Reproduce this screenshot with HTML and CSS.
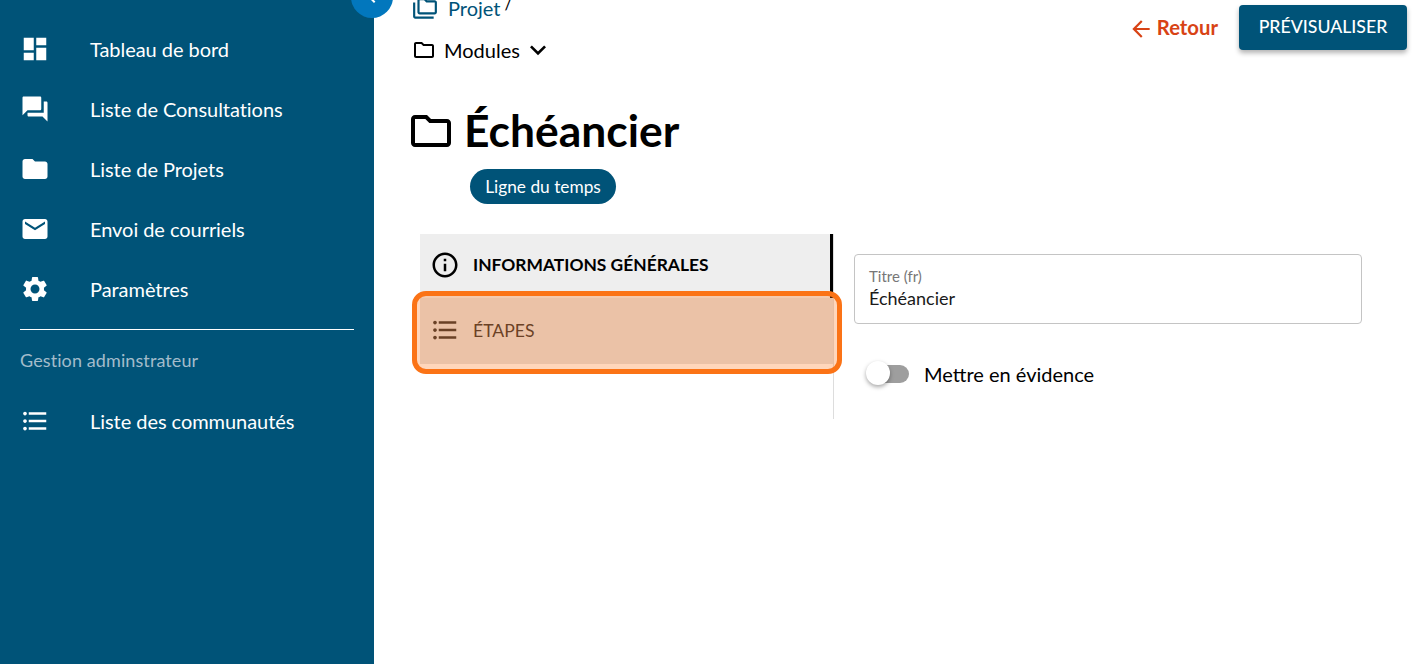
FILE: index.html
```html
<!DOCTYPE html>
<html lang="fr">
<head>
<meta charset="utf-8">
<title>Échéancier</title>
<link rel="stylesheet" href="styles.css">
</head>
<body>
<div class="app">
  <aside class="sidebar">
    <nav class="nav">
      <a class="nav-item"><svg class="nav-icon" viewBox="0 0 24 24"><path d="M3 13h8V3H3v10zm0 8h8v-6H3v6zm10 0h8V11h-8v10zm0-18v6h8V3h-8z"/></svg><span>Tableau de bord</span></a>
      <a class="nav-item"><svg class="nav-icon" viewBox="0 0 24 24"><path d="M21 6h-2v9H6v2c0 .55.45 1 1 1h11l4 4V7c0-.55-.45-1-1-1zm-4 6V3c0-.55-.45-1-1-1H3c-.55 0-1 .45-1 1v14l4-4h10c.55 0 1-.45 1-1z"/></svg><span>Liste de Consultations</span></a>
      <a class="nav-item"><svg class="nav-icon" viewBox="0 0 24 24"><path d="M10 4H4c-1.1 0-1.99.9-1.99 2L2 18c0 1.1.9 2 2 2h16c1.1 0 2-.9 2-2V8c0-1.1-.9-2-2-2h-8l-2-2z"/></svg><span>Liste de Projets</span></a>
      <a class="nav-item"><svg class="nav-icon" viewBox="0 0 24 24"><path d="M20 4H4c-1.1 0-1.99.9-1.99 2L2 18c0 1.1.9 2 2 2h16c1.1 0 2-.9 2-2V6c0-1.1-.9-2-2-2zm0 4l-8 5-8-5V6l8 5 8-5v2z"/></svg><span>Envoi de courriels</span></a>
      <a class="nav-item"><svg class="nav-icon" viewBox="0 0 24 24"><path d="M19.14 12.94c.04-.3.06-.61.06-.94 0-.32-.02-.64-.07-.94l2.03-1.58c.18-.14.23-.41.12-.61l-1.92-3.32c-.12-.22-.37-.29-.59-.22l-2.39.96c-.5-.38-1.03-.7-1.62-.94l-.36-2.54c-.04-.24-.24-.41-.48-.41h-3.84c-.24 0-.43.17-.47.41l-.36 2.54c-.59.24-1.13.57-1.62.94l-2.39-.96c-.22-.08-.47 0-.59.22L2.74 8.87c-.12.21-.08.47.12.61l2.03 1.58c-.05.3-.09.63-.09.94s.02.64.07.94l-2.03 1.58c-.18.14-.23.41-.12.61l1.92 3.32c.12.22.37.29.59.22l2.39-.96c.5.38 1.03.7 1.62.94l.36 2.54c.05.24.24.41.48.41h3.84c.24 0 .44-.17.47-.41l.36-2.54c.59-.24 1.13-.56 1.62-.94l2.39.96c.22.08.47 0 .59-.22l1.92-3.32c.12-.22.07-.47-.12-.61l-2.01-1.58zM12 15.6c-1.98 0-3.6-1.62-3.6-3.6s1.62-3.6 3.6-3.6 3.6 1.62 3.6 3.6-1.62 3.6-3.6 3.6z"/></svg><span>Paramètres</span></a>
    </nav>
    <hr class="nav-divider">
    <div class="nav-heading">Gestion adminstrateur</div>
    <nav class="nav">
      <a class="nav-item"><svg class="nav-icon" viewBox="0 0 24 24"><path d="M4 10.5c-.83 0-1.5.67-1.5 1.5s.67 1.5 1.5 1.5 1.5-.67 1.5-1.5-.67-1.5-1.5-1.5zm0-6c-.83 0-1.5.67-1.5 1.5S3.17 7.5 4 7.5 5.5 6.83 5.5 6 4.83 4.5 4 4.5zm0 12c-.83 0-1.5.68-1.5 1.5s.68 1.5 1.5 1.5 1.5-.68 1.5-1.5-.67-1.5-1.5-1.5zM7 19h14v-2H7v2zm0-6h14v-2H7v2zm0-8v2h14V5H7z"/></svg><span>Liste des communautés</span></a>
    </nav>
    <button class="collapse-btn" type="button" aria-label="Réduire"><svg viewBox="0 0 24 24"><path d="M15.41 7.41L14 6l-6 6 6 6 1.41-1.41L10.83 12z"/></svg></button>
  </aside>

  <main class="main">
    <div class="top-row">
      <div class="crumbs">
        <div class="crumb-project">
          <svg class="crumb-project-icon" viewBox="0 0 24 24"><path d="M3 19h17v2H3c-1.1 0-2-.9-2-2V6h2v13zM23 6v9c0 1.1-.9 2-2 2H7c-1.1 0-2-.9-2-2l.01-11C5.01 2.9 5.9 2 7 2h5l2 2h7c1.1 0 2 .9 2 2zM7 15h14V6h-7.83l-2-2H7v11z"/></svg>
          <a class="crumb-link">Projet</a><span class="crumb-sep">/</span>
        </div>
        <div class="crumb-modules">
          <svg class="crumb-modules-icon" viewBox="0 0 24 24"><path d="M9.17 6l2 2H20v10H4V6h5.17M10 4H4c-1.1 0-1.99.9-1.99 2L2 18c0 1.1.9 2 2 2h16c1.1 0 2-.9 2-2V8c0-1.1-.9-2-2-2h-8l-2-2z"/></svg>
          <span>Modules</span>
          <svg class="crumb-chevron" viewBox="0 0 24 24"><path d="M16.59 8.59L12 13.17 7.41 8.59 6 10l6 6 6-6z"/></svg>
        </div>
      </div>
      <div class="actions">
        <a class="back-link"><svg class="back-icon" viewBox="0 0 24 24"><path d="M20 11H7.83l5.59-5.59L12 4l-8 8 8 8 1.41-1.41L7.83 13H20v-2z"/></svg><span>Retour</span></a>
        <button class="preview-btn" type="button">PRÉVISUALISER</button>
      </div>
    </div>

    <h1 class="page-title"><svg class="title-icon" viewBox="0 0 24 24"><path d="M9.17 6l2 2H20v10H4V6h5.17M10 4H4c-1.1 0-1.99.9-1.99 2L2 18c0 1.1.9 2 2 2h16c1.1 0 2-.9 2-2V8c0-1.1-.9-2-2-2h-8l-2-2z"/></svg><span>Échéancier</span></h1>
    <div class="chip-row"><span class="chip">Ligne du temps</span></div>

    <section class="editor">
      <div class="tabs">
        <div class="tab tab-active">
          <svg class="tab-icon" viewBox="0 0 24 24"><path d="M11 7h2v2h-2zm0 4h2v6h-2zm1-9C6.48 2 2 6.48 2 12s4.48 10 10 10 10-4.48 10-10S17.52 2 12 2zm0 18c-4.41 0-8-3.59-8-8s3.59-8 8-8 8 3.59 8 8-3.59 8-8 8z"/></svg>
          <span>INFORMATIONS GÉNÉRALES</span>
        </div>
        <div class="tab tab-focus">
          <svg class="tab-icon" viewBox="0 0 24 24"><path d="M4 10.5c-.83 0-1.5.67-1.5 1.5s.67 1.5 1.5 1.5 1.5-.67 1.5-1.5-.67-1.5-1.5-1.5zm0-6c-.83 0-1.5.67-1.5 1.5S3.17 7.5 4 7.5 5.5 6.83 5.5 6 4.83 4.5 4 4.5zm0 12c-.83 0-1.5.68-1.5 1.5s.68 1.5 1.5 1.5 1.5-.68 1.5-1.5-.67-1.5-1.5-1.5zM7 19h14v-2H7v2zm0-6h14v-2H7v2zm0-8v2h14V5H7z"/></svg>
          <span>ÉTAPES</span>
        </div>
        <div class="focus-ring"></div>
      </div>
      <div class="form">
        <div class="field">
          <span class="field-label">Titre (fr)</span>
          <span class="field-value">Échéancier</span>
        </div>
        <div class="switch-row">
          <span class="switch"><span class="switch-track"></span><span class="switch-thumb"></span></span>
          <span class="switch-label">Mettre en évidence</span>
        </div>
      </div>
    </section>
  </main>
</div>
</body>
</html>
```

FILE: styles.css
```css
* { box-sizing: border-box; }
html, body { margin: 0; height: 100%; overflow: hidden; background: #fff; }
body { font-family: Lato, "Liberation Sans", sans-serif; color: #000; }
svg { display: block; fill: currentColor; flex: none; }

.app { display: flex; height: 664px; }

.sidebar {
  position: relative;
  width: 374px;
  flex: none;
  background: #005378;
  color: #fff;
  padding: 19px 20px 0;
}
.nav { display: flex; flex-direction: column; margin: 0 -20px; }
.nav-item {
  display: flex;
  align-items: center;
  height: 60px;
  padding-left: 23px;
  font-size: 20px;
  letter-spacing: -0.05px;
}
.nav-icon { width: 24px; height: 24px; margin-right: 43px; transform: scale(1.25); }
.nav-divider { border: 0; border-top: 1px solid #fff; margin: 10px 0 0; height: 1px; }
.nav-heading { margin-top: 20px; height: 41px; line-height: 20px; font-size: 18px; letter-spacing: 0.1px; color: #a3bccb; }
.collapse-btn {
  position: absolute;
  top: -24px;
  right: -19px;
  width: 42px;
  height: 42px;
  border: 0;
  padding: 9px;
  border-radius: 50%;
  background: #0277bd;
  color: #fff;
}
.collapse-btn svg { width: 24px; height: 24px; }

.main { flex: 1; min-width: 0; padding: 0 20px 0 38px; }

.top-row { display: flex; justify-content: space-between; height: 73px; }
.crumbs { display: flex; flex-direction: column; margin-top: -3px; }
.crumb-project { display: flex; align-items: center; height: 24px; font-size: 20px; }
.crumb-project-icon { width: 26px; height: 26px; color: #005378; margin-right: 10px; }
.crumb-link { color: #005378; margin-top: -2px; line-height: 16px; }
.crumb-sep { font-size: 17px; line-height: 7px; margin: -11px 0 0 4px; color: #000; }
.crumb-modules { display: flex; align-items: center; height: 30px; margin-top: 14px; font-size: 20px; }
.crumb-modules-icon { width: 24px; height: 24px; margin-right: 8px; }
.crumb-chevron { width: 32px; height: 32px; margin-left: 2px; }

.actions { display: flex; align-items: flex-start; padding-top: 5px; }
.back-link { display: flex; align-items: center; height: 43px; margin-right: 21px; color: #d84315; font-size: 20.3px; font-weight: 700; }
.back-icon { width: 26px; height: 26px; margin-right: 3px; margin-top: 5px; }
.preview-btn {
  width: 168px;
  height: 45px;
  border: 0;
  border-radius: 4px;
  padding: 0 0 2px;
  background: #005378;
  color: #fff;
  font: 500 17.7px Lato, sans-serif;
  box-shadow: 0 3px 5px rgba(0,0,0,.3);
}

.page-title { display: flex; align-items: center; margin: 29px 0 0 -5px; height: 56px; font-size: 44.4px; font-weight: 700; line-height: 56px; }
.title-icon { width: 48px; height: 48px; margin-right: 9px; margin-top: 2px; }
.chip-row { margin: 11px 0 0 58px; display: flex; }
.chip {
  height: 35px;
  width: 146px;
  border-radius: 18px;
  background: #005378;
  color: #fff;
  font-size: 17.3px;
  line-height: 35px;
  text-align: center;
}

.editor { display: flex; margin: 30px 0 0 8px; height: 185px; }
.tabs { position: relative; width: 414px; flex: none; border-right: 1px solid #ddd; }
.tab { display: flex; align-items: center; padding-left: 10px; width: 413px; }
.tab-icon { width: 30px; height: 30px; margin-right: 13px; }
.tab-active { height: 64px; background: #eee; border-right: 3px solid #000; font-size: 17.4px; font-weight: 700; padding-bottom: 3px; }
.tab-focus { height: 66px; background: #e3e3e3; color: #2a2a2a; font-size: 17.6px; padding-bottom: 2px; }
.focus-ring {
  position: absolute;
  left: -8px;
  top: 57px;
  width: 430px;
  height: 83px;
  border: 5px solid #fb7316;
  border-radius: 14px;
  background: rgba(255,120,30,.3);
}

.form { flex: 1; padding: 20px 0 0 20px; }
.field {
  width: 508px;
  height: 70px;
  border: 1px solid #c4c4c4;
  border-radius: 4px;
  padding: 13px 14px 0;
  display: flex;
  flex-direction: column;
}
.field-label { font-size: 15px; line-height: 17px; color: #777; }
.field-value { font-size: 18px; line-height: 24px; margin-top: 1px; color: #1a1a1a; }
.switch-row { display: flex; align-items: center; margin-top: 35px; padding-left: 12px; }
.switch { position: relative; display: block; width: 44px; height: 30px; margin-right: 14px; }
.switch-track { position: absolute; left: 8px; top: 6px; width: 35px; height: 18px; border-radius: 9px; background: #9e9e9e; }
.switch-thumb { position: absolute; left: 0; top: 2px; width: 24px; height: 24px; border-radius: 50%; background: #fff; box-shadow: 0 2px 4px rgba(0,0,0,.35); }
.switch-label { font-size: 20px; }
```
